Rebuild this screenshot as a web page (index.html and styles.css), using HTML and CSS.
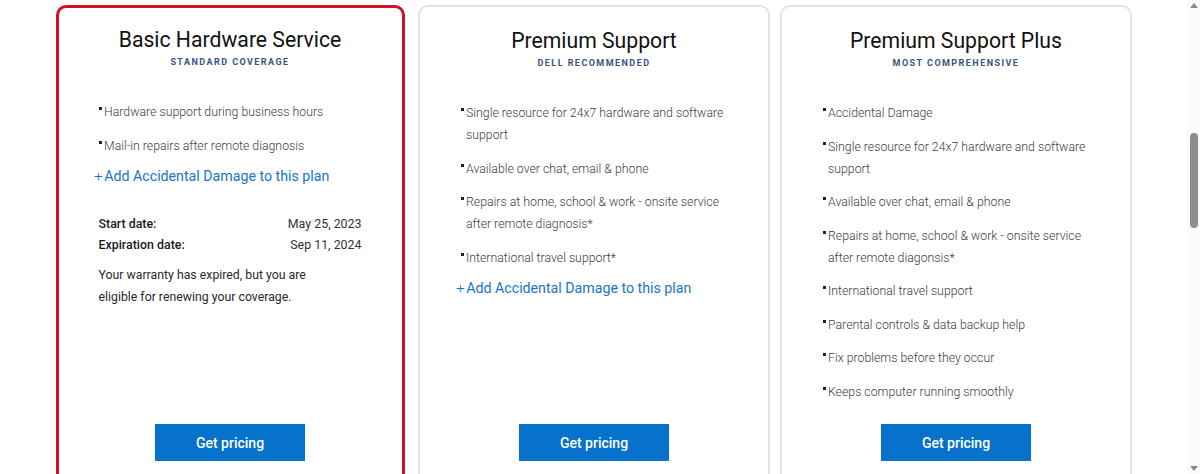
FILE: index.html
```html
<!DOCTYPE html>
<html lang="en">
<head>
<meta charset="utf-8">
<title>Support plans</title>
<link rel="stylesheet" href="styles.css">
</head>
<body>
<div class="page">
  <main class="viewport">
    <div class="plans">
      <section class="card card-selected">
        <h2 class="title">Basic Hardware Service</h2>
        <p class="tag">STANDARD COVERAGE</p>
        <ul class="features">
          <li>Hardware support during business hours</li>
          <li>Mail-in repairs after remote diagnosis</li>
        </ul>
        <a class="add-link" href="#"><span class="plus">+</span>Add Accidental Damage to this plan</a>
        <dl class="dates">
          <div class="date-row"><dt>Start date:</dt><dd>May 25, 2023</dd></div>
          <div class="date-row"><dt>Expiration date:</dt><dd>Sep 11, 2024</dd></div>
        </dl>
        <p class="note">Your warranty has expired, but you are<br>eligible for renewing your coverage.</p>
        <a class="btn" href="#">Get pricing</a>
      </section>
      <section class="card">
        <h2 class="title">Premium Support</h2>
        <p class="tag">DELL RECOMMENDED</p>
        <ul class="features">
          <li>Single resource for 24x7 hardware and software support</li>
          <li>Available over chat, email &amp; phone</li>
          <li>Repairs at home, school &amp; work - onsite service after remote diagnosis*</li>
          <li>International travel support*</li>
        </ul>
        <a class="add-link" href="#"><span class="plus">+</span>Add Accidental Damage to this plan</a>
        <a class="btn" href="#">Get pricing</a>
      </section>
      <section class="card card-last">
        <h2 class="title">Premium Support Plus</h2>
        <p class="tag">MOST COMPREHENSIVE</p>
        <ul class="features">
          <li>Accidental Damage</li>
          <li>Single resource for 24x7 hardware and software support</li>
          <li>Available over chat, email &amp; phone</li>
          <li>Repairs at home, school &amp; work - onsite service after remote diagonsis*</li>
          <li>International travel support</li>
          <li>Parental controls &amp; data backup help</li>
          <li>Fix problems before they occur</li>
          <li>Keeps computer running smoothly</li>
        </ul>
        <a class="btn" href="#">Get pricing</a>
      </section>
    </div>
  </main>
  <div class="scrollbar" aria-hidden="true">
    <span class="arrow arrow-up"></span>
    <span class="thumb"></span>
    <span class="arrow arrow-down"></span>
  </div>
</div>
</body>
</html>
```
FILE: styles.css
```css
* { box-sizing: border-box; }
html, body { margin: 0; padding: 0; background: #fff; }
body {
  font-family: Roboto, "Liberation Sans", Arial, sans-serif;
  color: #222;
  height: 474px;
  overflow: hidden;
}
.page {
  display: flex;
  height: 474px;
}
.viewport {
  flex: 1;
  overflow: hidden;
  padding-top: 5px;
}
.plans {
  width: 1076px;
  margin: 0 auto;
  display: grid;
  grid-template-columns: repeat(3, 352px);
  gap: 10px;
  align-items: stretch;
}
.card {
  display: flex;
  flex-direction: column;
  border: 2px solid #e2e2e2;
  border-radius: 10px;
  padding: 20px 40px 34px 41px;
  background: #fff;
}
.card-selected {
  border: 3px solid #ce1126;
  padding-top: 18px;
  padding-left: 40px;
  padding-bottom: 33px;
  margin-right: 3px;
}
.title {
  margin: 0;
  font-size: 21.2px;
  line-height: 28px;
  font-weight: 400;
  color: #111;
  text-align: center;
}
.tag {
  margin: 1px 0 0;
  font-size: 9px;
  line-height: 14px;
  font-weight: 700;
  letter-spacing: 1.45px;
  color: #34557f;
  text-align: center;
}
.features {
  list-style: none;
  margin: 32px 0 0;
  padding: 0 0 0 0.5px;
}
.features li {
  display: flex;
  font-size: 12.3px;
  line-height: 22px;
  font-weight: 300;
  color: #3d3d3d;
  margin-bottom: 11.5px;
}
.features li::before {
  content: "";
  flex: none;
  width: 2.5px;
  height: 3px;
  background: #222;
  margin: 6px 2.5px 0 0;
}
.features li:last-child { margin-bottom: 0; }
.add-link {
  display: block;
  margin: 8px 0 0 -4.5px;
  font-size: 14.2px;
  line-height: 22px;
  color: #1a74c9;
  text-decoration: none;
}
.plus {
  font-weight: 300;
  font-size: 15.5px;
  margin-right: 1.5px;
}
.dates {
  margin: 26px 0 0;
  padding: 0;
}
.date-row {
  display: flex;
  justify-content: space-between;
  font-size: 12.4px;
  line-height: 21.5px;
}
.date-row dt { font-weight: 500; color: #1a1a1a; }
.date-row dd { margin: 0; color: #333; }
.note {
  margin: 8px 0 0;
  font-size: 12.3px;
  line-height: 22px;
  color: #2a2a2a;
}
.btn {
  margin: auto auto 0;
  display: flex;
  align-items: center;
  justify-content: center;
  width: 150px;
  height: 37px;
  background: #0672cb;
  color: #fff;
  font-size: 14px;
  font-weight: 500;
  text-decoration: none;
}
.card-last .features { margin-bottom: 21.5px; }
.scrollbar {
  flex: none;
  width: 13px;
  height: 474px;
  background: #fafafa;
  position: relative;
}
.thumb {
  position: absolute;
  left: 3px;
  top: 133px;
  width: 8px;
  height: 95px;
  border-radius: 4px;
  background: #8e8e8e;
}
.arrow {
  position: absolute;
  left: 3px;
  width: 0;
  height: 0;
  border-left: 4px solid transparent;
  border-right: 4px solid transparent;
}
.arrow-up { top: 3px; border-bottom: 5px solid #8a8a8a; }
.arrow-down { bottom: 3px; border-top: 5px solid #8a8a8a; }
```
